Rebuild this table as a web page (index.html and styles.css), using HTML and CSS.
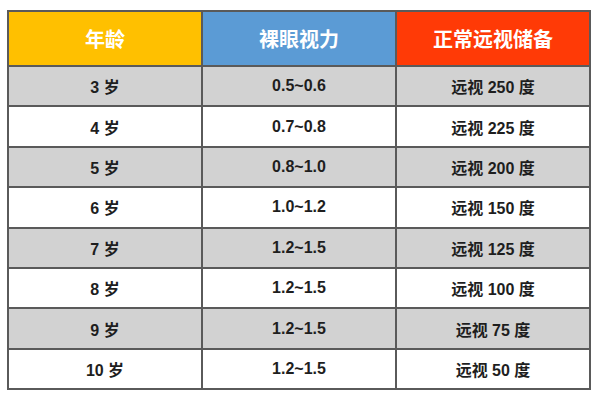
FILE: index.html
```html
<!DOCTYPE html>
<html lang="zh-CN">
<head>
<meta charset="utf-8">
<title>年龄与视力</title>
<link rel="stylesheet" href="styles.css">
</head>
<body>
<table class="vision">
  <thead>
    <tr>
      <th class="h-age">年龄</th>
      <th class="h-eye">裸眼视力</th>
      <th class="h-res">正常远视储备</th>
    </tr>
  </thead>
  <tbody>
    <tr class="gray"><td>3 岁</td><td>0.5~0.6</td><td>远视 250 度</td></tr>
    <tr><td>4 岁</td><td>0.7~0.8</td><td>远视 225 度</td></tr>
    <tr class="gray"><td>5 岁</td><td>0.8~1.0</td><td>远视 200 度</td></tr>
    <tr><td>6 岁</td><td>1.0~1.2</td><td>远视 150 度</td></tr>
    <tr class="gray"><td>7 岁</td><td>1.2~1.5</td><td>远视 125 度</td></tr>
    <tr><td>8 岁</td><td>1.2~1.5</td><td>远视 100 度</td></tr>
    <tr class="gray"><td>9 岁</td><td>1.2~1.5</td><td>远视 75 度</td></tr>
    <tr><td>10 岁</td><td>1.2~1.5</td><td>远视 50 度</td></tr>
  </tbody>
</table>
</body>
</html>
```
FILE: styles.css
```css
html, body {
  margin: 0;
  padding: 0;
  background: #ffffff;
}

body {
  padding: 10px 0 0 7px;
  font-family: "Liberation Sans", "Noto Sans CJK SC", sans-serif;
}

.vision {
  border-collapse: collapse;
  width: 584px;
  table-layout: fixed;
  border: 2px solid #6f6f6f;
}

.vision th,
.vision td {
  border: 2px solid #5a5a5a;
  text-align: center;
  vertical-align: middle;
  padding: 0;
}

.vision th {
  height: 53px;
  color: #ffffff;
  font-size: 20px;
  font-weight: bold;
}

.vision td {
  height: 38.4px;
  color: #1e1e1e;
  font-size: 16px;
  font-weight: bold;
  background: #ffffff;
}

.vision tr.gray td {
  background: #d2d2d2;
}

.h-age { background: #ffc000; }
.h-eye { background: #5b9bd5; }
.h-res { background: #ff3a06; }
```
